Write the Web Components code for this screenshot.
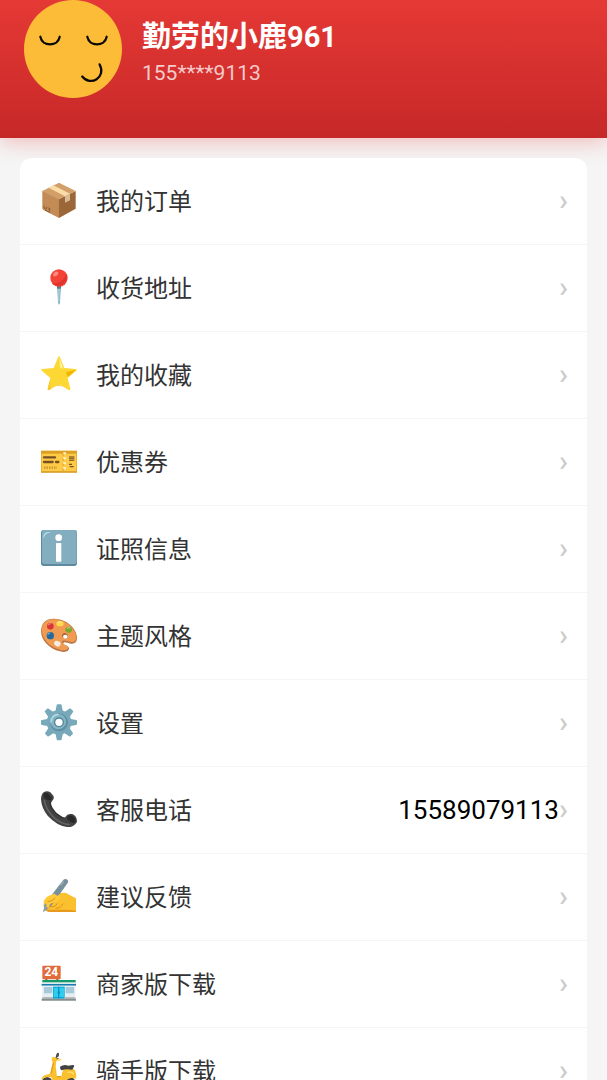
<!DOCTYPE html>
<html lang="zh-CN">
<head>
<meta charset="UTF-8">
<meta name="viewport" content="width=device-width, initial-scale=1.0">
<title>我的</title>
<style>
  html {
    scrollbar-width: none;
  }
  body {
    margin: 0;
    background: #f5f5f5;
    color: #333;
    font-family: Roboto, 'Noto Sans CJK SC', sans-serif;
  }
</style>
</head>
<body>
<profile-header>
  <svg slot="avatar" viewBox="0 0 96 96" aria-hidden="true">
    <circle cx="48" cy="48" r="48" fill="#fdbc38"/>
    <g fill="none" stroke="#0b0906" stroke-width="2.2" stroke-linecap="round">
      <path d="M16 36C18 46 33 46 35 36"/>
      <path d="M62 36C64 46 79 46 81 36"/>
      <path d="M74 63C81 76 65 85 57 75"/>
    </g>
  </svg>
  <span slot="name">勤劳的小鹿961</span>
  <span slot="phone">155****9113</span>
</profile-header>

<menu-list>
  <menu-item href="#orders">
    <svg slot="icon" viewBox="-3 -3 114 114" aria-hidden="true">
      <path d="M4 27L54 51V108L6 83Q4 81 4 79Z" fill="#c38b55"/>
      <path d="M54 51L104 27V80L54 108Z" fill="#9b6638"/>
      <path d="M4 27L54 2L104 27L54 51Z" fill="#d39f68"/>
      <path d="M23 17L37 10L87 35L72 43Z" fill="#fbdba7"/>
      <path d="M72 43L87 35V55L72 62Z" fill="#d8bb94"/>
      <path d="M9 71V78L14 81M16 75V82M20 77L29 82M25 80V89M12 84L27 92" fill="none" stroke="#6f4a2b" stroke-width="2"/>
      <path d="M4 27L54 51V108" fill="none" stroke="#b67b45"/>
    </svg>
    我的订单
  </menu-item>
  <menu-item href="#address">
    <svg slot="icon" viewBox="-3 -3 114 114" aria-hidden="true">
      <path d="M48 48H60L57 100Q54 114 51 100Z" fill="#82aec0"/>
      <path d="M52 50H56L55 98H52Z" fill="#b8d5df"/>
      <path d="M48 50H60V59H48Z" fill="#527f91"/>
      <circle cx="54" cy="27" r="26" fill="#f44336"/>
      <path d="M76 15A26 26 0 0 1 32 41Q62 49 76 15Z" fill="#df352e"/>
      <ellipse cx="44" cy="15" rx="9" ry="6" transform="rotate(-38 44 15)" fill="#ff8a80"/>
    </svg>
    收货地址
  </menu-item>
  <menu-item href="#favorites">
    <svg slot="icon" viewBox="-3 -3 114 114" aria-hidden="true">
      <path d="M51 4Q54-2 57 4L70 36L103 39Q110 40 105 45L80 66L88 98Q89 105 82 101L54 84L26 101Q19 105 20 98L28 66L3 45Q-2 40 5 39L38 36Z" fill="#fdd835"/>
      <path d="M55 5L67 39L57 34Z" fill="#fff59d"/>
      <path d="M75 49L105 41L80 63Z" fill="#f0b400"/>
      <path d="M28 69L20 99Q21 104 27 100L53 84Q75 96 86 103Q50 77 28 101Z" fill="#f8c82a"/>
    </svg>
    我的收藏
  </menu-item>
  <menu-item href="#coupons">
    <svg slot="icon" viewBox="-3 -3 114 114" aria-hidden="true">
      <path d="M0 23H108V88H0Z" fill="#ffca45"/>
      <path d="M0 23H108V32H0Z" fill="#dca022"/>
      <path d="M0 85H108V89H0Z" fill="#d09a25"/>
      <path d="M0 32H3V85H0ZM105 32H108V85H105Z" fill="#ecb331"/>
      <path d="M9 43H42M9 57H35M45 57H52" stroke="#755128" stroke-width="7" stroke-linecap="round"/>
      <path d="M9 74H48" stroke="#a77d31" stroke-width="7" stroke-dasharray="2 3"/>
      <path d="M71 28V88" stroke="#fff4cf" stroke-width="8" stroke-dasharray="6 9"/>
      <path d="M64 33L68 36L64 39M64 47L68 50L64 53M64 62L68 65L64 68M64 77L68 80L64 83" fill="none" stroke="#cb8e26" stroke-width="2"/>
      <path d="M84 42H100M84 47H100M84 52H100" stroke="#916a2b" stroke-width="4"/>
      <path d="M84 64H93M86 71H98" stroke="#795225" stroke-width="4"/>
    </svg>
    优惠券
  </menu-item>
  <menu-item href="#license">
    <svg slot="icon" viewBox="-3 -3 114 114" aria-hidden="true">
      <rect width="108" height="108" rx="8" fill="#5f8a9d"/>
      <rect x="3" y="0" width="104" height="102" rx="7" fill="#82aec0"/>
      <path d="M7 21Q7 7 22 6L30 7Q10 10 8 26Z" fill="#b9e4ea"/>
      <circle cx="53" cy="23" r="10" fill="#fff"/>
      <rect x="45" y="39" width="16" height="56" rx="2" fill="#fff"/>
    </svg>
    证照信息
  </menu-item>
  <menu-item href="#theme">
    <svg slot="icon" viewBox="-3 -3 114 114" aria-hidden="true">
      <path d="M1 34C5 11 24 3 45 6C77 8 102 31 107 55C111 72 103 82 90 80C79 78 70 72 67 78C64 84 84 84 84 94C84 104 72 107 57 103C22 95-5 65 1 34Z" fill="#b87543"/>
      <path d="M3 31C8 11 24 5 45 7C75 10 98 31 105 54C109 69 101 77 90 75C77 72 65 67 63 75C61 83 82 83 81 92C79 101 67 101 57 98C24 91-2 61 3 31Z" fill="#f09b51"/>
      <circle cx="28" cy="28" r="10" fill="#db3434"/>
      <ellipse cx="57" cy="20" rx="11" ry="8" fill="#ffd94a"/>
      <ellipse cx="83" cy="38" rx="10" ry="9" fill="#78a82c"/>
      <circle cx="28" cy="56" r="11" fill="#22699e"/>
      <ellipse cx="49" cy="80" rx="10" ry="8" transform="rotate(28 49 80)" fill="#f6eee5"/>
      <ellipse cx="72" cy="57" rx="9" ry="8" transform="rotate(35 72 57)" fill="#a76537"/>
      <ellipse cx="73" cy="59" rx="7" ry="6" fill="#fff"/>
      <path d="M21 25Q23 20 29 20M50 18Q54 13 61 16M78 34Q83 30 88 34M20 54Q22 47 28 48" fill="none" stroke="#fff" stroke-opacity=".5" stroke-width="3"/>
    </svg>
    主题风格
  </menu-item>
  <menu-item href="#settings">
    <svg slot="icon" viewBox="-3 -3 114 114" aria-hidden="true">
      <g fill="#78a9bb">
        <circle cx="54" cy="55" r="37"/>
        <path id="teeth" d="M43 24L47 3Q47 1 50 1H59Q62 1 62 4L66 24ZM43 86L47 106Q47 109 50 109H59Q62 109 62 106L66 86Z"/>
        <use href="#teeth" transform="rotate(45 54 55)"/>
        <use href="#teeth" transform="rotate(90 54 55)"/>
        <use href="#teeth" transform="rotate(135 54 55)"/>
      </g>
      <circle cx="54" cy="55" r="27" fill="#608fa2"/>
      <circle cx="52" cy="53" r="23" fill="#83b5c6"/>
      <path d="M30 54Q31 33 51 31" fill="none" stroke="#abd8e2" stroke-width="5" stroke-linecap="round"/>
      <circle cx="54" cy="55" r="15" fill="#54869a"/>
      <circle cx="54" cy="55" r="11" fill="#fff"/>
    </svg>
    设置
  </menu-item>
  <menu-item href="tel:15589079113">
    <svg slot="icon" viewBox="-3 -3 114 114" aria-hidden="true">
      <path d="M8 4Q18-3 28 4L37 14Q41 21 34 29Q28 34 31 42Q39 64 65 78Q72 82 75 76Q79 68 91 69Q101 69 107 83Q110 92 104 98Q94 110 78 108Q48 104 20 74Q2 53 0 25Q0 11 8 4Z" fill="#424242"/>
      <path d="M8 8Q17 2 23 9L31 18Q35 24 29 27Q22 30 14 24Q5 15 8 8ZM82 75Q95 69 102 84Q107 94 99 96Q91 97 81 87Q75 79 82 75Z" fill="#292929"/>
      <path d="M10 29Q15 57 39 80Q62 100 84 101" fill="none" stroke="#636363" stroke-width="5" stroke-linecap="round"/>
      <path d="M27 31Q26 51 46 68Q61 81 71 82" fill="none" stroke="#2d2d2d" stroke-width="3"/>
    </svg>
    客服电话
    <span slot="value">15589079113</span>
  </menu-item>
  <menu-item href="#feedback">
    <svg slot="icon" viewBox="-3 -3 114 114" aria-hidden="true">
      <path d="M8 77L22 58L42 44Q49 39 57 45L74 44Q86 51 105 61V100L91 98L78 101H29Q13 102 11 91Q5 84 8 77Z" fill="#fbc02d"/>
      <path d="M12 91Q17 97 32 95H72L91 96L105 98V102H28Q14 102 12 91Z" fill="#e79a1f"/>
      <path d="M65 8Q69 1 77 4Q84 8 80 15L30 84L7 102L11 78Z" fill="#78909c"/>
      <path d="M68 10L15 80L11 96" fill="none" stroke="#9cb0b8" stroke-width="4"/>
      <path d="M12 82L22 89L7 102Z" fill="#8d9da4"/>
      <path d="M7 72Q14 54 32 50Q46 43 56 50Q63 58 54 65Q44 74 32 76Q25 78 25 86Q22 92 17 88Q15 84 18 78Q12 79 7 72Z" fill="#ffca36"/>
      <path d="M38 46L57 20L69 29L50 54Z" fill="#78909c"/>
      <path d="M21 71Q34 70 42 61M27 86Q41 89 49 77M45 91Q61 91 65 78" fill="none" stroke="#dc941e" stroke-width="3" stroke-linecap="round"/>
    </svg>
    建议反馈
  </menu-item>
  <menu-item href="#merchant">
    <svg slot="icon" viewBox="-3 -3 114 114" aria-hidden="true">
      <path d="M13 39H19V47H13ZM46 39H52V47H46Z" fill="#81543d"/>
      <rect x="4" y="2" width="55" height="41" rx="3" fill="#e06b3c"/>
      <text x="31" y="34" text-anchor="middle" font-family="Roboto, sans-serif" font-size="36" font-weight="700" fill="#fff">24</text>
      <path d="M4 45H104V54H4Z" fill="#159b68"/>
      <path d="M2 52H105V61H2Z" fill="#ddebea"/>
      <path d="M2 57H105V62H2Z" fill="#177dae"/>
      <path d="M4 62H103V102H4Z" fill="#e5eef2"/>
      <path d="M9 66H34V85H9ZM74 66H99V85H74Z" fill="#a8c9dc"/>
      <path d="M36 65H71V101H36Z" fill="#00a8dc"/>
      <path d="M38 68H52V96H38ZM55 68H69V96H55Z" fill="#31cdef"/>
      <path d="M53 65V101M51 79V86M56 79V86" stroke="#087fae" stroke-width="2"/>
      <path d="M4 96H36V102H4ZM71 96H103V102H71Z" fill="#bbb"/>
      <path d="M2 101H105V107H2Z" fill="#858e91"/>
    </svg>
    商家版下载
  </menu-item>
  <menu-item href="#rider">
    <svg slot="icon" viewBox="-3 -3 114 114" aria-hidden="true">
      <circle cx="18" cy="91" r="16" fill="#454545"/>
      <circle cx="18" cy="91" r="7" fill="#b8c2c5"/>
      <circle cx="87" cy="91" r="16" fill="#454545"/>
      <circle cx="87" cy="91" r="7" fill="#b8c2c5"/>
      <path d="M45 18L49 8M36 20L52 21" stroke="#4b4b4b" stroke-width="4" stroke-linecap="round"/>
      <ellipse cx="50" cy="9" rx="4" ry="7" transform="rotate(12 50 9)" fill="#4b4b4b"/>
      <path d="M33 16Q43 13 51 23L46 28L44 43L48 74H61Q62 52 78 49L99 52Q108 62 105 80Q84 72 72 91H43Q33 87 30 76Q9 72 2 86Q0 75 11 70L27 65L37 34L32 25Z" fill="#fbc02d"/>
      <path d="M37 32L30 64M48 74H60" fill="none" stroke="#e39b1c" stroke-width="4"/>
      <path d="M57 44Q70 36 81 41L96 39Q102 40 98 46L94 53Q75 49 63 55Q57 54 57 44Z" fill="#424242"/>
      <path d="M51 20L60 20Q63 22 59 26L51 28Z" fill="#ffe078"/>
      <path d="M79 61Q93 57 98 67" fill="none" stroke="#ffe078" stroke-width="4"/>
      <path d="M43 87H71" stroke="#696969" stroke-width="5"/>
    </svg>
    骑手版下载
  </menu-item>
</menu-list>

<script>
// 顶部用户信息
class ProfileHeader extends HTMLElement {
  constructor() {
    super();
    this.attachShadow({ mode: 'open' });
    this.shadowRoot.innerHTML = `
      <style>
        :host {
          display: block;
        }
        .header {
          display: flex;
          align-items: center;
          gap: 20px;
          padding: 0 24px 40px;
          background: linear-gradient(#e53935, #c62828);
          box-shadow: 0 4px 20px rgba(229, 57, 53, 0.3);
        }
        ::slotted(svg) {
          display: block;
          flex: none;
          width: 98px;
          height: 98px;
        }
        .info {
          padding-top: 8px;
        }
        .name {
          margin: 0 0 4px;
          color: white;
          font-size: 29px;
          font-weight: 700;
          line-height: 36px;
        }
        .phone {
          margin: 0;
          color: rgba(255, 255, 255, 0.75);
          font-size: 21px;
          line-height: 28px;
        }
      </style>
      <header class="header">
        <slot name="avatar"></slot>
        <div class="info">
          <h1 class="name"><slot name="name"></slot></h1>
          <p class="phone"><slot name="phone"></slot></p>
        </div>
      </header>
    `;
  }
}

// 菜单卡片
class MenuList extends HTMLElement {
  constructor() {
    super();
    this.attachShadow({ mode: 'open' });
    this.shadowRoot.innerHTML = `
      <style>
        :host {
          display: block;
          padding: 20px;
        }
        .card {
          position: relative;
          overflow: hidden;
          border-radius: 12px;
          background: white;
        }
      </style>
      <nav class="card" aria-label="个人中心"><slot></slot></nav>
    `;
  }
}

// 菜单行
class MenuItem extends HTMLElement {
  constructor() {
    super();
    this.attachShadow({ mode: 'open' });
    this.shadowRoot.innerHTML = `
      <style>
        :host {
          display: block;
          border-bottom: 1px solid #f5f5f5;
        }
        :host(:last-child) {
          border-bottom: none;
        }
        .row {
          display: flex;
          align-items: center;
          min-height: 86px;
          padding: 0 19px 0 20px;
          color: inherit;
          text-decoration: none;
        }
        .row:active {
          background: #fafafa;
        }
        .icon {
          width: 38px;
          margin-right: 18px;
          padding-bottom: 2px;
        }
        ::slotted(svg) {
          display: block;
          width: 38px;
          height: 38px;
        }
        .label {
          flex: 1;
          padding-top: 2px;
          font-size: 24px;
          line-height: 36px;
        }
        .value {
          color: black;
          font-size: 26px;
          line-height: 36px;
        }
        .arrow {
          padding-bottom: 2px;
          color: #ccc;
          font-size: 30px;
          font-weight: 500;
          line-height: 36px;
        }
      </style>
      <a class="row">
        <span class="icon"><slot name="icon"></slot></span>
        <span class="label"><slot></slot></span>
        <span class="value"><slot name="value"></slot></span>
        <span class="arrow" aria-hidden="true">›</span>
      </a>
    `;
  }

  connectedCallback() {
    const row = this.shadowRoot.querySelector('.row');
    row.href = this.getAttribute('href') || '#';
  }
}

// 定义自定义元素
customElements.define('profile-header', ProfileHeader);
customElements.define('menu-list', MenuList);
customElements.define('menu-item', MenuItem);
</script>
</body>
</html>
